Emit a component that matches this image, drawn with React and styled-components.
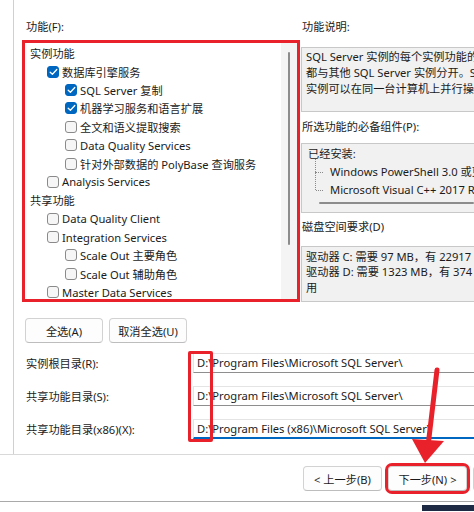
import React from "react";
import styled, { createGlobalStyle } from "styled-components";

const Global = createGlobalStyle`
  html, body { margin: 0; padding: 0; background: #ffffff; }
  body { font-family: "Noto Sans", "Noto Sans CJK SC", sans-serif; color: #1b1b1b; }
  * { box-sizing: border-box; }
`;

const RED = "#e8212b";

const Root = styled.div`
  position: relative;
  width: 474px;
  height: 512px;
  overflow: hidden;
  background: #fff;
  font-size: 11.2px;
`;

const Body = styled.div`
  display: flex;
  height: 455px;
  border-bottom: 1px solid #d9d9d9;
`;

const Gutter = styled.div`
  width: 14px;
  flex: none;
  border-right: 1px solid #d0d0d0;
`;

const Content = styled.div`
  flex: 1;
  min-width: 0;
  padding: 19px 0 0 8px;
  display: flex;
  flex-direction: column;
`;

const TopGrid = styled.div`
  display: grid;
  grid-template-columns: 278px 1fr;
  min-width: 0;
`;

const Col = styled.div`
  display: flex;
  flex-direction: column;
  min-width: 0;
`;

const Label = styled.div`
  height: 16px;
  line-height: 16px;
  white-space: nowrap;
  padding-left: ${(p) => p.$indent || 0}px;
  margin-top: ${(p) => p.$mt || 0}px;
`;

const ListFrame = styled.div`
  margin-top: 5px;
  height: 262px;
  border: 3px solid ${RED};
  display: flex;
  overflow: hidden;
  background: #fff;
`;

const ListItems = styled.div`
  flex: 1;
  padding-top: 1px;
  overflow: hidden;
`;

const Item = styled.div`
  display: flex;
  align-items: center;
  gap: 3px;
  height: 18.4px;
  padding-left: ${(p) => p.$indent}px;
  white-space: nowrap;
`;

const Box = styled.span`
  width: 12px;
  height: 12px;
  flex: none;
  border-radius: 3px;
  border: 1px solid ${(p) => (p.$checked ? "#0067c0" : "#8a8a8a")};
  background: ${(p) => (p.$checked ? "#0067c0" : "#f6f6f6")};
  display: flex;
  align-items: center;
  justify-content: center;
`;

const Track = styled.div`
  width: 16px;
  flex: none;
  background: #f4f4f4;
  padding-top: 9px;
  display: flex;
  justify-content: center;
  align-items: flex-start;
`;

const Thumb = styled.div`
  width: 2px;
  height: 193px;
  border-radius: 1px;
  background: #8c8c8c;
`;

const InfoBox = styled.div`
  margin-left: 1px;
  margin-top: ${(p) => p.$mt}px;
  height: ${(p) => p.$h}px;
  border: 1px solid #c8c8c8;
  border-right: none;
  background: #f1f1f1;
  padding: ${(p) => p.$pt}px 0 0 4px;
  overflow: hidden;
  white-space: nowrap;
  line-height: ${(p) => p.$lh}px;
`;

const TreeHeader = styled.div`
  padding-left: 2px;
`;

const Tree = styled.div`
  margin-left: 9px;
  position: relative;
`;

const TreeItem = styled.div`
  position: relative;
  padding-left: 15px;
  &::before {
    content: "";
    position: absolute;
    left: 0;
    top: ${(p) => (p.$first ? -4 : -9)}px;
    height: ${(p) => (p.$first ? 13 : 18)}px;
    border-left: 1px dotted #8a8a8a;
  }
  &::after {
    content: "";
    position: absolute;
    left: 1px;
    top: 9px;
    width: 7px;
    border-top: 1px dotted #8a8a8a;
  }
`;

const HScroll = styled.div`
  margin: 3px 0 0 13px;
  height: 2px;
  background: #8c8c8c;
  border-radius: 1px;
`;

const ButtonRow = styled.div`
  display: flex;
  gap: 6px;
  margin-top: 16px;
  padding-left: 3px;
`;

const Btn = styled.button`
  font: inherit;
  color: #1b1b1b;
  width: ${(p) => p.$w || 78}px;
  height: 25px;
  flex: none;
  padding: 0;
  border: 1px solid #d2d2d2;
  border-bottom-color: #bdbdbd;
  border-radius: 4px;
  background: #fdfdfd;
  white-space: nowrap;
  outline: ${(p) => (p.$marked ? `3px solid ${RED}` : "none")};
  outline-offset: 0;
`;

const PathGrid = styled.div`
  display: grid;
  grid-template-columns: 171px 1fr;
  row-gap: 13px;
  margin-top: 10px;
  align-items: center;
`;

const PathLabel = styled.div`
  padding-left: 4px;
  white-space: nowrap;
`;

const PathInput = styled.div`
  height: 20px;
  line-height: 18px;
  padding-left: 3px;
  border-top: 1px solid #e4e4e4;
  border-left: 1px solid #e4e4e4;
  border-bottom: ${(p) => (p.$focus ? "2px solid #0067c0" : "1px solid #8e8e8e")};
  white-space: nowrap;
  overflow: hidden;
  background: #fff;
`;

const Footer = styled.div`
  height: 47px;
  display: flex;
  gap: 6px;
  padding: 11px 0 0 303px;
  border-bottom: 1px solid #a9a9a9;
`;

const BottomStrip = styled.div`
  display: flex;
  height: 9px;
`;

const StripFill = styled.div`
  flex: ${(p) => (p.$dark ? "0 0 52px" : "1")};
  background: ${(p) => (p.$dark ? "#1e2a44" : "#ffffff")};
  margin-top: ${(p) => (p.$dark ? 3 : 0)}px;
`;

const DriveMark = styled.div`
  position: absolute;
  left: 188px;
  top: 351px;
  width: 25px;
  height: 91px;
  border: 3px solid ${RED};
  border-radius: 2px;
  pointer-events: none;
`;

const ArrowSvg = styled.svg`
  position: absolute;
  left: 400px;
  top: 360px;
  pointer-events: none;
`;

const Check = () => (
  <svg width="9" height="8" viewBox="0 0 9 8">
    <polyline points="1.2,4.2 3.4,6.3 7.8,1.5" fill="none" stroke="#fff" strokeWidth="1.3" strokeLinecap="round" strokeLinejoin="round" />
  </svg>
);

const features = [
  { t: "实例功能", l: 0 },
  { t: "数据库引擎服务", l: 1, c: true },
  { t: "SQL Server 复制", l: 2, c: true },
  { t: "机器学习服务和语言扩展", l: 2, c: true },
  { t: "全文和语义提取搜索", l: 2 },
  { t: "Data Quality Services", l: 2 },
  { t: "针对外部数据的 PolyBase 查询服务", l: 2 },
  { t: "Analysis Services", l: 1 },
  { t: "共享功能", l: 0 },
  { t: "Data Quality Client", l: 1 },
  { t: "Integration Services", l: 1 },
  { t: "Scale Out 主要角色", l: 2 },
  { t: "Scale Out 辅助角色", l: 2 },
  { t: "Master Data Services", l: 1 },
];

const indents = [5, 22, 40];

const paths = [
  { label: "实例根目录(R):", value: "D:\\Program Files\\Microsoft SQL Server\\" },
  { label: "共享功能目录(S):", value: "D:\\Program Files\\Microsoft SQL Server\\" },
  { label: "共享功能目录(x86)(X):", value: "D:\\Program Files (x86)\\Microsoft SQL Server\\", focus: true },
];

export default function App() {
  return (
    <>
      <Global />
      <Root>
        <Body>
          <Gutter />
          <Content>
            <TopGrid>
              <Col>
                <Label $indent={4}>功能(F):</Label>
                <ListFrame>
                  <ListItems>
                    {features.map((f, i) => (
                      <Item key={i} $indent={indents[f.l]}>
                        {f.l > 0 && <Box $checked={f.c}>{f.c && <Check />}</Box>}
                        <span>{f.t}</span>
                      </Item>
                    ))}
                  </ListItems>
                  <Track>
                    <Thumb />
                  </Track>
                </ListFrame>
              </Col>
              <Col>
                <Label $indent={2}>功能说明:</Label>
                <InfoBox $mt={12} $h={65} $pt={1} $lh={16}>
                  <div>SQL Server 实例的每个实例功能的配置和操作</div>
                  <div>都与其他 SQL Server 实例分开。SQL Server</div>
                  <div>实例可以在同一台计算机上并行操作。</div>
                </InfoBox>
                <Label $indent={2} $mt={7}>所选功能的必备组件(P):</Label>
                <InfoBox $mt={8} $h={70} $pt={1} $lh={18}>
                  <TreeHeader>已经安装:</TreeHeader>
                  <Tree>
                    <TreeItem $first>Windows PowerShell 3.0 或更高版本</TreeItem>
                    <TreeItem>Microsoft Visual C++ 2017 Redistributable</TreeItem>
                  </Tree>
                  <HScroll />
                </InfoBox>
                <Label $indent={2} $mt={6}>磁盘空间要求(D)</Label>
                <InfoBox $mt={11} $h={56} $pt={2} $lh={15.3}>
                  <div>驱动器 C: 需要 97 MB，有 22917 MB 可用</div>
                  <div>驱动器 D: 需要 1323 MB，有 374 GB 可</div>
                  <div>用</div>
                </InfoBox>
              </Col>
            </TopGrid>
            <ButtonRow>
              <Btn>全选(A)</Btn>
              <Btn>取消全选(U)</Btn>
            </ButtonRow>
            <PathGrid>
              {paths.map((p, i) => (
                <React.Fragment key={i}>
                  <PathLabel>{p.label}</PathLabel>
                  <PathInput $focus={p.focus}>{p.value}</PathInput>
                </React.Fragment>
              ))}
            </PathGrid>
          </Content>
        </Body>
        <Footer>
          <Btn $w={79}>&lt; 上一步(B)</Btn>
          <Btn $w={79} $marked>下一步(N) &gt;</Btn>
          <Btn $w={79}>取消</Btn>
        </Footer>
        <BottomStrip>
          <StripFill />
          <StripFill $dark />
        </BottomStrip>
        <DriveMark />
        <ArrowSvg width="60" height="110" viewBox="0 0 60 110">
          <line x1="37" y1="10" x2="28.5" y2="82" stroke={RED} strokeWidth="5" strokeLinecap="round" />
          <polygon points="12,79 44,81 25,103" fill={RED} />
        </ArrowSvg>
      </Root>
    </>
  );
}
